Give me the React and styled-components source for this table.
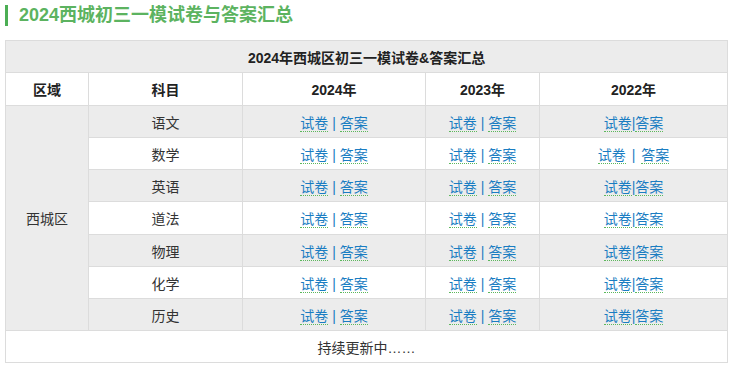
import styled, { createGlobalStyle } from 'styled-components';

const GlobalStyle = createGlobalStyle`
  body {
    margin: 0;
    background: #fff;
    font-family: "Liberation Sans", "Noto Sans CJK SC", sans-serif;
  }
`;

const subjects = ['语文', '数学', '英语', '道法', '物理', '化学', '历史'];

export default function App() {
  return (
    <Page>
      <GlobalStyle />
      <Title>2024西城初三一模试卷与答案汇总</Title>
      <Table>
        <colgroup>
          <col style={{ width: 83 }} />
          <col style={{ width: 154 }} />
          <col style={{ width: 183 }} />
          <col style={{ width: 114 }} />
          <col style={{ width: 188 }} />
        </colgroup>
        <tbody>
          <Row shaded>
            <HeadCell colSpan={5}>2024年西城区初三一模试卷&amp;答案汇总</HeadCell>
          </Row>
          <Row>
            <HeadCell tall>区域</HeadCell>
            <HeadCell tall>科目</HeadCell>
            <HeadCell tall>2024年</HeadCell>
            <HeadCell tall>2023年</HeadCell>
            <HeadCell tall>2022年</HeadCell>
          </Row>
          {subjects.map((s, i) => (
            <Row key={s} shaded={i % 2 === 0}>
              {i === 0 && (
                <Cell rowSpan={7} shaded>西城区</Cell>
              )}
              <Cell tall={i === 3}>{s}</Cell>
              <Cell><Links /></Cell>
              <Cell><Links /></Cell>
              <Cell>{i === 1 ? <Links wide /> : <Links tight />}</Cell>
            </Row>
          ))}
          <Row>
            <Cell colSpan={5}>持续更新中……</Cell>
          </Row>
        </tbody>
      </Table>
    </Page>
  );
}

function Links({ tight, wide }) {
  return (
    <span>
      <Link>试卷</Link>
      <Sep gap={tight ? 0 : wide ? 6 : 4}>|</Sep>
      <Link>答案</Link>
    </span>
  );
}

const Page = styled.div`
  width: 732px;
  height: 369px;
  padding: 5px 5px 0 5px;
  box-sizing: border-box;
`;

const Title = styled.h2`
  margin: 0 0 14px 0;
  height: 21px;
  line-height: 21px;
  border-left: 3px solid #4cae54;
  padding-left: 11px;
  font-size: 18px;
  font-weight: bold;
  color: #5cb360;
  font-family: "Liberation Sans", "Noto Sans CJK SC", sans-serif;
`;

const Table = styled.table`
  width: 722px;
  table-layout: fixed;
  border-collapse: collapse;
  font-size: 14px;
  color: #333;
`;

const Row = styled.tr`
  background: ${p => (p.shaded ? '#ececec' : '#fff')};
`;

const HeadCell = styled.td`
  border: 1px solid #dcdcdc;
  height: ${p => (p.tall ? 32 : 31)}px;
  padding: 0;
  text-align: center;
  font-weight: bold;
  color: #222;
`;

const Cell = styled.td`
  border: 1px solid #dcdcdc;
  height: ${p => (p.tall ? 32 : 31)}px;
  padding: 0;
  text-align: center;
  background: ${p => (p.shaded ? '#ececec' : 'transparent')};
`;

const Link = styled.a`
  color: #1a7dc2;
  text-decoration: none;
  border-bottom: 1px dotted #5cb85c;
`;

const Sep = styled.span`
  color: #1a7dc2;
  margin: 0 ${p => p.gap}px;
`;
